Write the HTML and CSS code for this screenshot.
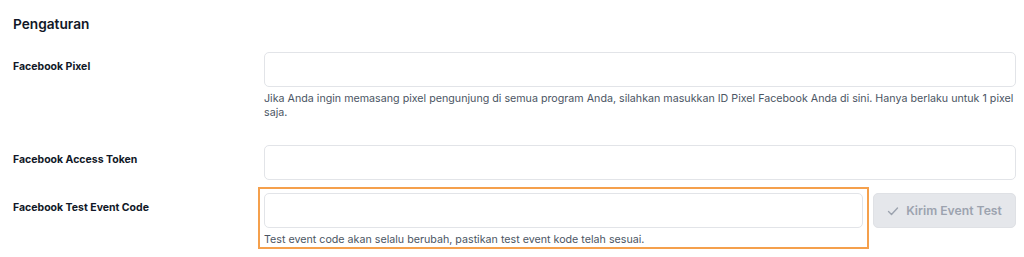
FILE: index.html
```html
<!DOCTYPE html>
<html lang="en">
<head>
  <meta charset="UTF-8">
  <title>Pengaturan</title>
  <link rel="stylesheet" href="styles.css">
</head>
<body>

  <div class="settings">
    <h2>Pengaturan</h2>

    <div class="form-row">
      <label for="pixel">Facebook Pixel</label>
      <div class="field">
        <input type="text" id="pixel">
        <p class="help">Jika Anda ingin memasang pixel pengunjung di semua program Anda, silahkan masukkan ID Pixel Facebook Anda di sini. Hanya berlaku untuk 1 pixel saja.</p>
      </div>
    </div>

    <div class="form-row">
      <label for="token">Facebook Access Token</label>
      <div class="field">
        <input type="text" id="token">
      </div>
    </div>

    <div class="form-row">
      <label for="test-code">Facebook Test Event Code</label>
      <div class="field field-inline">
        <div class="highlight">
          <input type="text" id="test-code">
          <p class="help">Test event code akan selalu berubah, pastikan test event kode telah sesuai.</p>
        </div>
        <button type="button" class="btn" disabled>
          <svg width="12" height="12" viewBox="0 0 12 12" fill="none" stroke="currentColor" stroke-width="1.4" stroke-linecap="round" stroke-linejoin="round"><path d="M1.5 6.5l3 3 6-6.5"/></svg>
          Kirim Event Test
        </button>
      </div>
    </div>
  </div>

</body>
</html>
```

FILE: styles.css
```css
* {
  margin: 0;
  padding: 0;
  box-sizing: border-box;
  font-family: 'Inter', 'Noto Sans', sans-serif;
}

body {
  background: #fff;
  color: #111827;
}

.settings {
  padding: 14px 8px 0 13px;
}

.settings h2 {
  font-size: 13.7px;
  font-weight: 600;
  line-height: 20px;
  margin-bottom: 18px;
}

.form-row {
  display: grid;
  grid-template-columns: 251px 1fr;
  margin-bottom: 13px;
}

.form-row label {
  font-size: 10.5px;
  font-weight: 700;
  line-height: 14px;
  padding-top: 8px;
  color: #111827;
}

.field input {
  display: block;
  width: 100%;
  height: 35px;
  border: 1px solid #e2e4e8;
  border-radius: 5px;
  background: #fff;
}

.help {
  font-size: 10.7px;
  line-height: 14px;
  color: #4b5563;
  margin-top: 5px;
  margin-bottom: 12px;
}

.field-inline {
  display: flex;
  align-items: flex-start;
}

.highlight {
  flex: 1;
  border: 2px solid #f5a04c;
  padding: 4px 4px 0;
  margin: -6px 0 0 -6px;
}

.highlight .help {
  margin-bottom: 0;
}

.btn {
  width: 143px;
  height: 35px;
  margin-left: 4px;
  display: flex;
  align-items: center;
  justify-content: center;
  gap: 7px;
  background: #e5e7eb;
  border: 1px solid #dfe1e5;
  border-radius: 5px;
  color: #9ca3af;
  font-size: 12.2px;
  font-weight: 600;
}
```
